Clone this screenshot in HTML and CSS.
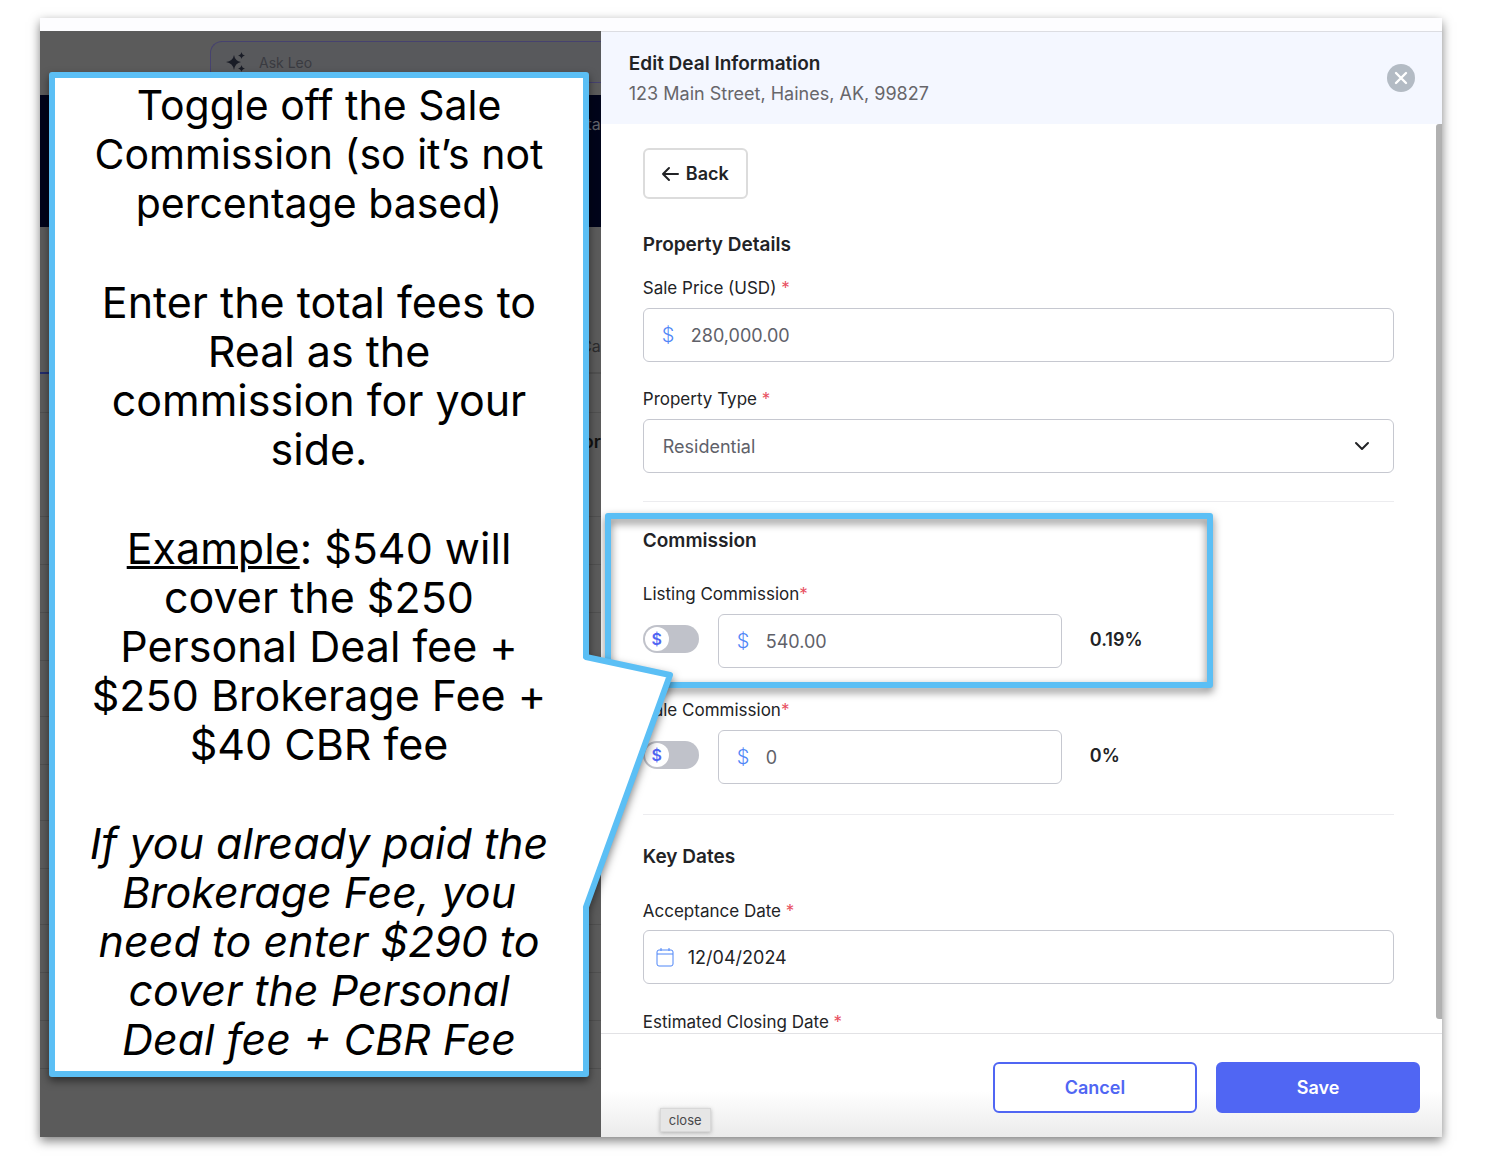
FILE: index.html
```html
<!DOCTYPE html>
<html lang="en">

<head>
    <meta charset="UTF-8">
    <meta name="viewport" content="width=device-width, initial-scale=1.0">
    <title>Edit Deal Information</title>
    <link rel="stylesheet" href="styles.css">
</head>

<body>

    <div class="window">
        <div class="window-bar"></div>

        <div class="window-content">
            <!-- dimmed page behind the drawer -->
            <div class="backdrop">
                <div class="topbar">
                    <div class="search">
                        <svg class="sparkle" viewBox="0 0 20 20" width="20" height="20">
                            <path d="M8 3 Q9 9 15 10 Q9 11 8 18 Q7 11 0 10 Q7 9 8 3Z" />
                            <path d="M15.500 0 Q16 3 19 3.500 Q16 4 15.500 7 Q15 4 12 3.500 Q15 3 15.500 0Z" />
                            <path d="M15.500 13 Q16 16 19 16.500 Q16 17 15.500 20 Q15 17 12 16.500 Q15 16 15.500 13Z" />
                        </svg>
                        <span>Ask Leo</span>
                    </div>
                </div>
                <div class="hero">ta</div>
                <div class="tabs">Ca</div>
                <div class="row row-head"></div>
                <div class="row row-title">or</div>
                <div class="row"></div>
                <div class="row"></div>
                <div class="row"></div>
                <div class="row row-tall"></div>
                <div class="row"></div>
                <div class="row row-tall"></div>
                <div class="row"></div>
                <div class="row row-tall"></div>
                <div class="row"></div>
                <div class="row"></div>
                <div class="row"></div>
            </div>

            <div class="drawer">
                <div class="drawer-header">
                    <div>
                        <h1>Edit Deal Information</h1>
                        <p>123 Main Street, Haines, AK, 99827</p>
                    </div>
                    <button class="close-btn" aria-label="Close">
                        <svg viewBox="0 0 28 28" width="28" height="28">
                            <circle cx="14" cy="14" r="14" fill="#b3bbc4" />
                            <path d="M9 9 L19 19 M19 9 L9 19" stroke="#fff" stroke-width="2.400" stroke-linecap="round" />
                        </svg>
                    </button>
                </div>

                <div class="drawer-body">
                    <button class="back-btn">
                        <svg viewBox="0 0 18 16" width="18" height="16">
                            <path d="M17 8 H2 M8 2 L2 8 L8 14" />
                        </svg>
                        Back
                    </button>

                    <section class="property">
                        <h2>Property Details</h2>
                        <label for="price">Sale Price (USD) <b>*</b></label>
                        <div class="field">
                            <span class="dollar">$</span>
                            <input type="text" id="price" value="280,000.00">
                        </div>
                        <label for="type">Property Type <b>*</b></label>
                        <div class="field select-field">
                            <select id="type">
                                <option>Residential</option>
                            </select>
                            <svg viewBox="0 0 16 10" width="16" height="10">
                                <path d="M2 2 L8 8 L14 2" />
                            </svg>
                        </div>
                    </section>

                    <section class="commission">
                        <div class="highlight"></div>
                        <h2>Commission</h2>
                        <label for="listing">Listing Commission<b>*</b></label>
                        <div class="commission-row">
                            <label class="toggle">
                                <input type="checkbox" aria-label="Listing commission as percentage">
                                <span>$</span>
                            </label>
                            <div class="field">
                                <span class="dollar">$</span>
                                <input type="text" id="listing" value="540.00">
                            </div>
                            <strong>0.19%</strong>
                        </div>
                        <label for="sale">Sale Commission<b>*</b></label>
                        <div class="commission-row">
                            <label class="toggle">
                                <input type="checkbox" aria-label="Sale commission as percentage">
                                <span>$</span>
                            </label>
                            <div class="field">
                                <span class="dollar">$</span>
                                <input type="text" id="sale" value="0">
                            </div>
                            <strong>0%</strong>
                        </div>
                    </section>

                    <section class="dates">
                        <h2>Key Dates</h2>
                        <label for="acceptance">Acceptance Date <b>*</b></label>
                        <div class="field date-field">
                            <svg viewBox="0 0 18 20" width="18" height="20">
                                <rect x="1" y="3" width="16" height="16" rx="2" />
                                <path d="M1 7 H17 M5 1 V4 M13 1 V4" />
                            </svg>
                            <input type="text" id="acceptance" value="12/04/2024">
                        </div>
                        <label>Estimated Closing Date <b>*</b></label>
                    </section>

                    <div class="scrollbar"></div>
                </div>

                <div class="drawer-footer">
                    <button class="cancel-btn">Cancel</button>
                    <button class="save-btn">Save</button>
                    <span class="tooltip">close</span>
                </div>
            </div>
        </div>

        <div class="callout">
            <svg class="callout-tail" viewBox="0 0 92 262" width="92" height="262">
                <polygon points="0,5 6,5 88,23 6,255 0,255" fill="#fff" />
                <polyline points="4,5 88,23 4,255" />
            </svg>
            <p class="intro">Toggle off the Sale<br>Commission (so it’s not<br>percentage based)</p>
            <p>Enter the total fees to<br>Real as the<br>commission for your<br>side.</p>
            <p><u>Example</u>: $540 will<br>cover the $250<br>Personal Deal fee +<br>$250 Brokerage Fee +<br>$40 CBR fee</p>
            <p><em>If you already paid the<br>Brokerage Fee, you<br>need to enter $290 to<br>cover the Personal<br>Deal fee + CBR Fee</em></p>
        </div>
    </div>

</body>

</html>
```
FILE: styles.css
```css
:root {
    --sky: #5bbff5;
    --primary: #5066f3;
    --icon-blue: #4f86f7;
    --border: #c6c8d0;
    --text: #222326;
    --red: #e8505f;
}

* {
    margin: 0;
    padding: 0;
    box-sizing: border-box;
}

body {
    font-family: Inter, "Liberation Sans", sans-serif;
    font-size: 18px;
    color: var(--text);
    background: #fff;
    padding: 18px 44px 23px 40px;
}

button,
input,
select {
    font: inherit;
    color: inherit;
}

button {
    cursor: pointer;
}

.window {
    position: relative;
    display: flex;
    flex-direction: column;
    height: calc(100vh - 41px);
    box-shadow: 0 4px 10px rgba(0, 0, 0, 0.5);
}

.window-bar {
    height: 13px;
    flex-shrink: 0;
    background: #fdfdff;
}

.window-content {
    flex: 1;
    min-height: 0;
    display: grid;
    grid-template-columns: 2fr 3fr;
    grid-template-rows: 100%;
}

/* dimmed page */
.backdrop {
    overflow: hidden;
    background: #5b5b5b;
    color: #2c2c2e;
}

.topbar {
    height: 64px;
    padding: 10px 0 0 170px;
}

.search {
    display: flex;
    align-items: center;
    gap: 13px;
    height: 42px;
    padding-left: 15px;
    border: 1px solid #46426f;
    border-right: 0;
    border-radius: 12px 0 0 12px;
    background: #58595c;
    color: #3a3b41;
    font-size: 14px;
}

.sparkle {
    fill: #191c26;
}

.hero {
    height: 132px;
    padding-top: 19px;
    background: #00041a;
    color: #62636b;
    font-size: 16px;
    text-align: right;
}

.tabs {
    height: 147px;
    padding-top: 109px;
    border-bottom: 2px solid #505050;
    border-image: linear-gradient(to right, #232c6b 50%, #505050 50%) 2;
    font-size: 16px;
    text-align: right;
}

.row {
    height: 48px;
    border-bottom: 1px solid #505050;
}

.row-head {
    height: 39px;
}

.row-title {
    height: 104px;
    padding-top: 18px;
    color: #111;
    font-size: 18px;
    font-weight: 600;
    text-align: right;
}

.row-tall {
    height: 56px;
}

/* drawer */
.drawer {
    display: flex;
    flex-direction: column;
    background: #fff;
}

.drawer-header {
    display: flex;
    align-items: center;
    justify-content: space-between;
    height: 93px;
    flex-shrink: 0;
    padding: 0 27px 0 28px;
    border-top: 1px solid #dcdde2;
    background: #f4f7ff;
}

.drawer-header h1 {
    padding-top: 2px;
    font-size: 19px;
    line-height: 30px;
    font-weight: 600;
}

.drawer-header p {
    line-height: 30px;
    color: #67666a;
}

.close-btn {
    width: 28px;
    height: 28px;
    border: 0;
    background: none;
}

.drawer-body {
    position: relative;
    flex: 1;
    min-height: 0;
    overflow: hidden;
    padding: 24px 48px 0 42px;
}

.scrollbar {
    position: absolute;
    top: 0;
    right: 0;
    bottom: 14px;
    width: 6px;
    border-radius: 3px 0 0 3px;
    background: #b1b1b1;
}

.back-btn {
    display: flex;
    align-items: center;
    gap: 7px;
    height: 51px;
    padding: 0 17px 0 16px;
    border: 2px solid #dcdcdc;
    border-radius: 6px;
    background: #fff;
    font-weight: 600;
}

.back-btn svg,
.select-field svg {
    fill: none;
    stroke: var(--text);
    stroke-width: 2;
    stroke-linecap: round;
    stroke-linejoin: round;
}

h2 {
    font-size: 19px;
    line-height: 28px;
    font-weight: 600;
}

label {
    display: block;
    font-size: 17px;
    line-height: 24px;
}

label b {
    color: var(--red);
    font-weight: 400;
}

.field {
    display: flex;
    align-items: center;
    height: 54px;
    padding: 0 18px;
    border: 1px solid var(--border);
    border-radius: 6px;
    color: #606169;
}

.field input {
    flex: 1;
    min-width: 0;
    border: 0;
    outline: none;
    background: none;
}

.dollar {
    width: 29px;
    color: var(--icon-blue);
    font-size: 20px;
    font-weight: 300;
}

.property {
    padding: 32px 0 28px;
    border-bottom: 1px solid #ececef;
}

.property label {
    margin: 17px 0 8px;
}

.property .field + label {
    margin-top: 25px;
}

.select-field {
    position: relative;
    padding: 0;
}

.select-field select {
    width: 100%;
    height: 100%;
    padding: 0 19px;
    border: 0;
    outline: none;
    background: none;
    appearance: none;
}

.select-field svg {
    position: absolute;
    right: 23px;
    pointer-events: none;
}

.commission {
    position: relative;
    padding: 25px 0 30px;
    border-bottom: 1px solid #ececef;
}

.commission h2 {
    margin-bottom: 27px;
}

.commission-row {
    display: flex;
    align-items: center;
    margin: 8px 0 30px;
}

.commission-row:last-child {
    margin-bottom: 0;
}

.commission-row .field {
    width: 344px;
    margin: 0 28px 0 19px;
}

.commission-row strong {
    margin-bottom: 4px;
    font-weight: 600;
}

.toggle {
    position: relative;
    width: 56px;
    height: 28px;
    margin-bottom: 4px;
}

.toggle input {
    display: block;
    width: 100%;
    height: 100%;
    appearance: none;
    border-radius: 14px;
    background: #c0c2ca;
}

.toggle span {
    position: absolute;
    top: 2px;
    left: 2px;
    width: 24px;
    height: 24px;
    border-radius: 50%;
    background: #fff;
    color: var(--primary);
    font-size: 16px;
    font-weight: 600;
    line-height: 24px;
    text-align: center;
}

.highlight {
    position: absolute;
    top: 11px;
    left: -38px;
    width: 608px;
    height: 175px;
    border: 6px solid var(--sky);
    border-radius: 3px;
    filter: drop-shadow(0 4px 4px rgba(0, 0, 0, 0.5));
    pointer-events: none;
}

.dates {
    padding-top: 28px;
}

.dates h2 {
    margin-bottom: 28px;
}

.dates .field {
    margin: 7px 0 26px;
}

.date-field {
    gap: 14px;
    padding: 0 12px;
    color: var(--text);
}

.date-field svg {
    fill: none;
    stroke: var(--icon-blue);
}

.drawer-footer {
    position: relative;
    display: flex;
    justify-content: flex-end;
    gap: 19px;
    flex-shrink: 0;
    padding: 28px 22px 24px;
    border-top: 1px solid #e2e2e5;
    background: linear-gradient(#fff 55%, #ebebeb);
}

.drawer-footer button {
    width: 204px;
    height: 51px;
    border: 2px solid var(--primary);
    border-radius: 6px;
    font-weight: 600;
}

.cancel-btn {
    background: #fff;
    color: var(--primary);
}

.save-btn {
    background: var(--primary);
    color: #fff;
}

.tooltip {
    position: absolute;
    left: 59px;
    bottom: 5px;
    padding: 0 8px;
    border: 1px solid #d8d8d8;
    background: #e6e6e6;
    box-shadow: 0 1px 4px rgba(0, 0, 0, 0.25);
    color: #48484a;
    font-size: 13px;
    line-height: 22px;
}

/* instruction callout lying over the page */
.callout {
    position: absolute;
    top: 54px;
    left: 9px;
    width: 540px;
    padding: 3px 0 7px;
    border: 6px solid var(--sky);
    border-radius: 3px;
    background: #fff;
    color: #000;
    font-size: 43px;
    line-height: 49px;
    text-align: center;
    filter: drop-shadow(0 4px 4px rgba(0, 0, 0, 0.5));
}

.callout p + p {
    margin-top: 50px;
}

.callout .intro {
    font-size: 41px;
}

.callout u {
    text-decoration-thickness: 3px;
}

.callout-tail {
    position: absolute;
    top: 574px;
    left: 527px;
}

.callout-tail polyline {
    fill: none;
    stroke: var(--sky);
    stroke-width: 6;
    stroke-linejoin: round;
    stroke-linecap: round;
}
```
